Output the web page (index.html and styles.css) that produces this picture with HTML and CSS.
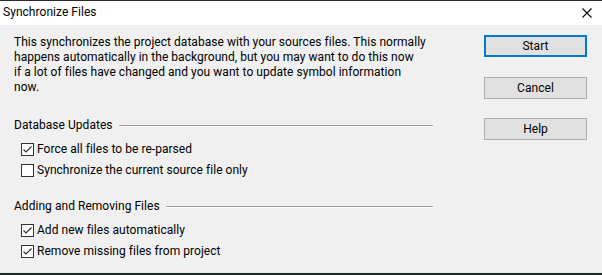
FILE: index.html
```html
<!DOCTYPE html>
<html lang="en">
<head>
    <meta charset="UTF-8">
    <meta name="viewport" content="width=device-width, initial-scale=1.0">
    <title>Synchronize Files</title>
    <link rel="stylesheet" href="styles.css">
</head>
<body>
    <div class="dialog">
        <div class="titlebar">
            <span class="title">Synchronize Files</span>
            <span class="close">
                <svg width="10" height="10" viewBox="0 0 10 10"><path d="M0.5 0.5 L9.5 9.5 M9.5 0.5 L0.5 9.5" stroke="#000" stroke-width="1.1" fill="none"/></svg>
            </span>
        </div>
        <div class="content">
            <div class="main">
                <div class="intro">
                    <span>This synchronizes the project database with your sources files. This normally</span>
                    <span>happens automatically in the background, but you may want to do this now</span>
                    <span>if a lot of files have changed and you want to update symbol information</span>
                    <span>now.</span>
                </div>

                <div class="group-title">Database Updates</div>
                <label class="check"><span class="box checked"></span>Force all files to be re-parsed</label>
                <label class="check"><span class="box"></span>Synchronize the current source file only</label>

                <div class="group-title second">Adding and Removing Files</div>
                <label class="check"><span class="box checked"></span>Add new files automatically</label>
                <label class="check"><span class="box checked"></span>Remove missing files from project</label>
            </div>
            <div class="actions">
                <button class="btn default">Start</button>
                <button class="btn">Cancel</button>
                <button class="btn">Help</button>
            </div>
        </div>
    </div>
</body>
</html>
```

FILE: styles.css
```css
body {
    margin: 0;
    padding: 0;
    font-family: Roboto, Arial, sans-serif;
    font-size: 12px;
    letter-spacing: 0.04px;
    color: #000;
}
.dialog {
    width: 602px;
    height: 275px;
    box-sizing: border-box;
    border-top: 1px solid #2b2b2b;
    border-bottom: 2px solid #1f2a24;
    background-color: #f0f0f0;
    display: flex;
    flex-direction: column;
}
.titlebar {
    height: 24px;
    background-color: #fff;
    display: flex;
    align-items: center;
    justify-content: space-between;
    padding: 0 10px 0 3px;
}
.title {
    line-height: 15px;
    margin-top: -1px;
}
.close {
    display: flex;
    margin-top: -1px;
}
.content {
    flex: 1;
    display: flex;
    padding: 10px 15px 0 14px;
}
.main {
    width: 419px;
    display: flex;
    flex-direction: column;
}
.intro {
    display: flex;
    flex-direction: column;
    line-height: 15px;
    white-space: nowrap;
}
.group-title {
    display: flex;
    align-items: center;
    line-height: 15px;
    margin-top: 23px;
    margin-bottom: 6px;
}
.group-title::after {
    content: "";
    flex: 1;
    margin-left: 6px;
    border-top: 1px solid #a0a0a0;
    border-bottom: 1px solid #fff;
}
.group-title.second {
    margin-top: 18px;
}
.check {
    display: flex;
    align-items: center;
    height: 21px;
    padding-left: 7px;
    line-height: 15px;
}
.box {
    width: 11px;
    height: 11px;
    border: 1px solid #333;
    background-color: #fff;
    margin-right: 3px;
    flex-shrink: 0;
}
.box.checked {
    background-image: url("data:image/svg+xml,%3Csvg xmlns='http://www.w3.org/2000/svg' width='11' height='11' viewBox='0 0 11 11'%3E%3Cpath d='M1.5 5.5 L4 8 L9.5 2.5' stroke='%23333' stroke-width='1.2' fill='none'/%3E%3C/svg%3E");
}
.actions {
    margin-left: auto;
    width: 103px;
    display: flex;
    flex-direction: column;
}
.btn {
    height: 22px;
    box-sizing: border-box;
    background-color: #e1e1e1;
    border: 1px solid #adadad;
    font-family: inherit;
    font-size: 12px;
    letter-spacing: inherit;
    color: #000;
    padding: 0;
    margin-bottom: 19px;
}
.btn.default {
    border: 2px solid #0078d7;
    margin-bottom: 20px;
}
```
